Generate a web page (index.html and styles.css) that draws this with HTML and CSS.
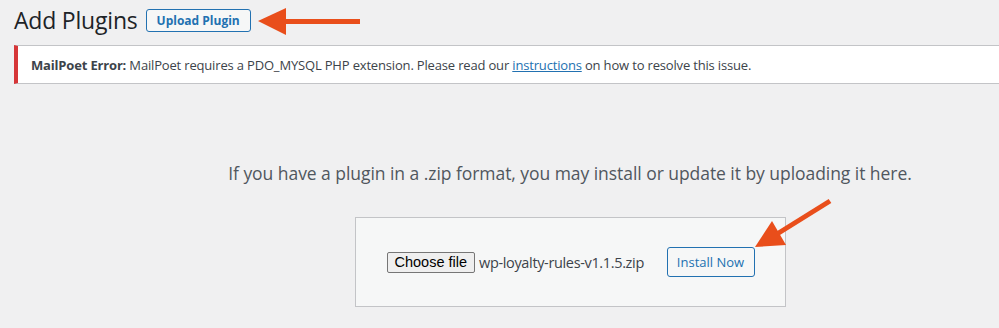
FILE: index.html
```
<!DOCTYPE html>
<html lang="en">
<head>
  <meta charset="UTF-8" />
  <title>Add Plugins</title>
  <link rel="stylesheet" href="styles.css">
</head>
<body>
  <div class="wrap">
    <div class="page-header">
      <h1>Add Plugins</h1>
      <a href="#" class="upload-btn">Upload Plugin</a>
    </div>

    <!-- MailPoet notice -->
    <div class="notice notice-error">
      <p><strong>MailPoet Error:</strong> MailPoet requires a PDO_MYSQL PHP extension. Please read our <a href="#">instructions</a> on how to resolve this issue.</p>
    </div>

    <div class="upload-plugin">
      <p class="install-help">If you have a plugin in a .zip format, you may install or update it by uploading it here.</p>
      <form class="upload-form">
        <button type="button" class="file-btn">Choose file</button>
        <span class="file-name">wp-loyalty-rules-v1.1.5.zip</span>
        <button type="submit" class="install-btn">Install Now</button>
      </form>
    </div>
  </div>

  <!-- annotation arrows -->
  <svg class="arrows" width="999" height="328" viewBox="0 0 999 328">
    <polygon points="258,21 286,8 286,35" fill="#e94e1b" />
    <rect x="284" y="19" width="76" height="5" fill="#e94e1b" />
    <polygon points="755,247 772,221 786,245" fill="#e94e1b" />
    <line x1="777" y1="234" x2="830" y2="201" stroke="#e94e1b" stroke-width="5" />
  </svg>
</body>
</html>
```

FILE: styles.css
```
body {
  margin: 0;
  background: #f0f0f1;
  font-family: "Open Sans", "Noto Sans", sans-serif;
  color: #3c434a;
  overflow: hidden;
  position: relative;
  height: 328px;
}

.wrap {
  margin-left: 14px;
  width: 1112px;
}

.page-header {
  display: flex;
  align-items: center;
  gap: 8px;
  padding-top: 9px;
}

.page-header h1 {
  margin: 0;
  font-size: 23px;
  font-weight: 400;
  line-height: 23px;
  color: #1d2327;
  letter-spacing: -0.2px;
}

.upload-btn {
  display: inline-block;
  height: 21px;
  line-height: 21px;
  padding: 0 10px;
  border: 1px solid #2271b1;
  border-radius: 3px;
  background: #f6f7f7;
  color: #2271b1;
  font-size: 12px;
  font-weight: 700;
  text-decoration: none;
}

.notice {
  margin-top: 13px;
  background: #fff;
  border: 1px solid #c3c4c7;
  border-left: 4px solid #d63638;
  padding: 0 13px;
  height: 37px;
  display: flex;
  align-items: center;
}

.notice p {
  margin: 0;
  font-size: 13px;
  letter-spacing: -0.17px;
}

.notice strong {
  font-weight: 700;
}

.notice a {
  color: #2271b1;
}

.upload-plugin {
  text-align: center;
}

.install-help {
  margin: 76px 0 0;
  font-size: 17.5px;
  line-height: 27px;
  color: #50575e;
  letter-spacing: -0.05px;
}

.upload-form {
  display: inline-flex;
  align-items: center;
  margin-top: 30px;
  width: 368px;
  height: 88px;
  padding: 0 30px 0 31px;
  background: #f6f7f7;
  border: 1px solid #c3c4c7;
}

.file-btn {
  height: 21px;
  padding: 0 7px;
  font-family: "Liberation Sans", Arial, sans-serif;
  font-size: 14.5px;
  color: #000;
  background: #efefef;
  border: 1px solid #767676;
  border-radius: 2px;
}

.file-name {
  margin-left: 4px;
  font-size: 14.5px;
  color: #3c434a;
  letter-spacing: -0.35px;
}

.install-btn {
  margin-left: auto;
  height: 30px;
  width: 88px;
  padding: 0;
  border: 1px solid #2271b1;
  border-radius: 3px;
  background: #f6f7f7;
  color: #2271b1;
  font-family: "Open Sans", "Noto Sans", sans-serif;
  font-size: 13px;
}

.arrows {
  position: absolute;
  top: 0;
  left: 0;
  pointer-events: none;
}
```
